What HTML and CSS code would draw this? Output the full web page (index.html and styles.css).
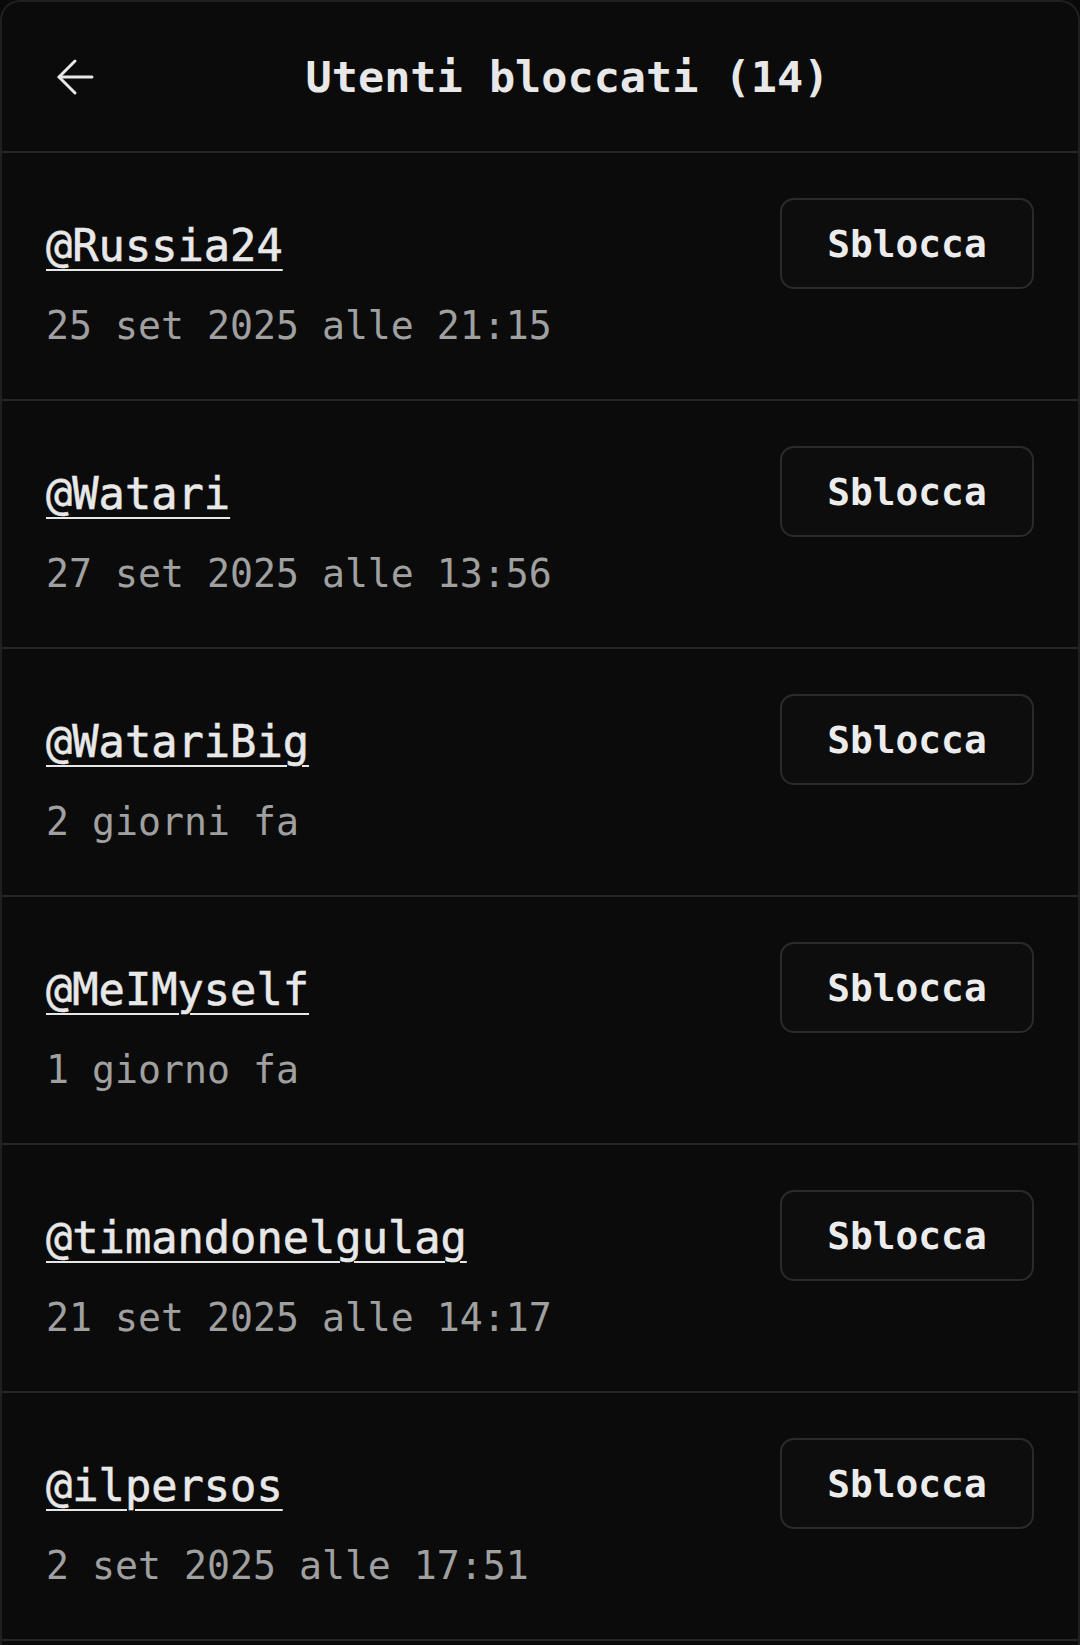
FILE: index.html
```html
<!DOCTYPE html>
<html lang="it">
<head>
    <meta charset="UTF-8">
    <title>Utenti bloccati</title>
    <link rel="stylesheet" href="styles.css">
</head>
<body>
<div class="panel">
    <div class="header">
        <a class="back" href="#">
            <svg width="38" height="38" viewBox="0 0 38 38" fill="none" stroke="currentColor" stroke-width="3" stroke-linecap="round" stroke-linejoin="round">
                <path d="M36 19H3"/>
                <path d="M19 3L3 19l16 16"/>
            </svg>
        </a>
        <h1 class="title">Utenti bloccati (14)</h1>
    </div>
    <ul class="list">
        <li class="row">
            <div class="info">
                <a class="name" href="#">@Russia24</a>
                <div class="date">25 set 2025 alle 21:15</div>
            </div>
            <button class="unblock">Sblocca</button>
        </li>
        <li class="row">
            <div class="info">
                <a class="name" href="#">@Watari</a>
                <div class="date">27 set 2025 alle 13:56</div>
            </div>
            <button class="unblock">Sblocca</button>
        </li>
        <li class="row">
            <div class="info">
                <a class="name" href="#">@WatariBig</a>
                <div class="date">2 giorni fa</div>
            </div>
            <button class="unblock">Sblocca</button>
        </li>
        <li class="row">
            <div class="info">
                <a class="name" href="#">@MeIMyself</a>
                <div class="date">1 giorno fa</div>
            </div>
            <button class="unblock">Sblocca</button>
        </li>
        <li class="row">
            <div class="info">
                <a class="name" href="#">@timandonelgulag</a>
                <div class="date">21 set 2025 alle 14:17</div>
            </div>
            <button class="unblock">Sblocca</button>
        </li>
        <li class="row">
            <div class="info">
                <a class="name" href="#">@ilpersos</a>
                <div class="date">2 set 2025 alle 17:51</div>
            </div>
            <button class="unblock">Sblocca</button>
        </li>
    </ul>
</div>
</body>
</html>
```

FILE: styles.css
```css
*{
    margin:0;
    padding:0;
    box-sizing: border-box;
}
body{
    background-color: #0a0a0a;
    font-family: "DejaVu Sans Mono", "Liberation Mono", monospace;
    color: #e8e8e8;
}
.panel{
    background-color: #0b0b0b;
    border: 2px solid #1f1f1f;
    border-bottom: none;
    border-radius: 20px 20px 0 0;
    min-height: 1645px;
}
.header{
    display: flex;
    align-items: center;
    height: 151px;
    padding: 0 37px 0 54px;
    border-bottom: 2px solid #262626;
}
.back{
    display: flex;
    color: #e8e8e8;
}
.title{
    flex: 1;
    text-align: center;
    font-size: 43.5px;
    font-weight: bold;
    color: #e8e8e8;
}
.list{
    list-style: none;
}
.row{
    display: flex;
    justify-content: space-between;
    align-items: flex-start;
    height: 248px;
    padding: 45px 44px 0 44px;
    border-bottom: 2px solid #262626;
}
.info{
    margin-top: 20px;
}
.name{
    display: inline-block;
    font-size: 43.7px;
    line-height: 56px;
    color: #e8e8e8;
    -webkit-text-stroke: 0.6px #e8e8e8;
    text-decoration: underline;
    text-decoration-thickness: 2px;
    text-underline-offset: 8px;
}
.date{
    margin-top: 28px;
    font-size: 38.2px;
    line-height: 48px;
    color: #a0a0a0;
}
.unblock{
    display: flex;
    align-items: center;
    justify-content: center;
    width: 254px;
    height: 91px;
    background-color: #0d0d0d;
    border: 2px solid #2a2a2a;
    border-radius: 14px;
    font-family: "DejaVu Sans Mono", "Liberation Mono", monospace;
    font-size: 37.8px;
    font-weight: bold;
    color: #ececec;
}
```
